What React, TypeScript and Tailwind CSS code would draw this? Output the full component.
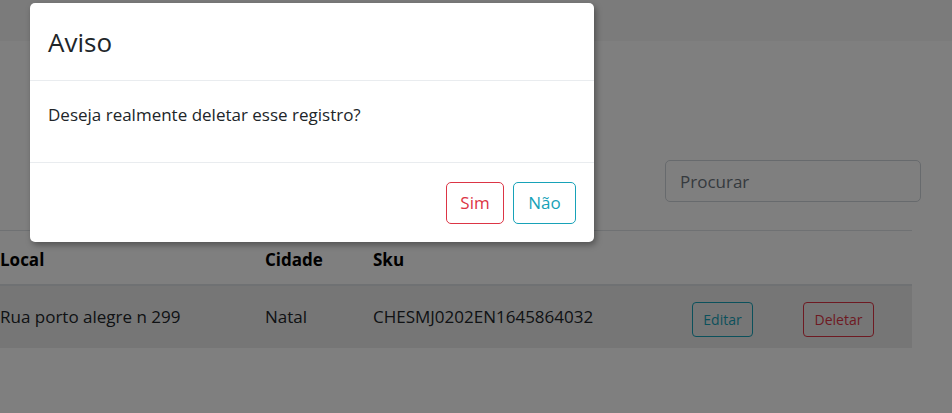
import React from "react";

export default function App() {
  return (
    <div className="relative h-[413px] w-[952px] overflow-hidden bg-white font-['Open_Sans','Noto_Sans',sans-serif] text-[#212529]">
      <div className="h-[41px] bg-[#f6f6f6]" />
      <div className="flex justify-end pr-[31px] pt-[119px]">
        <input
          readOnly
          placeholder="Procurar"
          className="h-[42px] w-[256px] rounded-[5px] border border-[#ced4da] bg-white px-[14px] text-[17px] text-[#495057] placeholder:text-[#6c757d] outline-none"
        />
      </div>
      <div className="mt-[28px] w-[912px] border-t border-[#dee2e6]">
        <div className="grid h-[55px] grid-cols-[265px_108px_319px_111px_109px] items-center border-b-2 border-[#dee2e6] pt-[4px] text-[17px] font-bold text-black">
          <div>Local</div>
          <div>Cidade</div>
          <div>Sku</div>
          <div />
          <div />
        </div>
        <div className="grid h-[62px] grid-cols-[265px_108px_319px_111px_109px] items-center bg-[#ededed] text-[17px]">
          <div>Rua porto alegre n 299</div>
          <div>Natal</div>
          <div>CHESMJ0202EN1645864032</div>
          <div className="pt-[5px]">
            <button className="h-[35px] w-[61px] rounded-[4px] border border-[#17a2b8] text-[14px] text-[#17a2b8]">
              Editar
            </button>
          </div>
          <div className="pt-[5px]">
            <button className="h-[35px] w-[71px] rounded-[4px] border border-[#dc3545] text-[14px] text-[#dc3545]">
              Deletar
            </button>
          </div>
        </div>
      </div>

      <div className="absolute inset-0 bg-black/50" />

      <div className="absolute left-[30px] top-[3px] w-[564px] rounded-[5px] bg-white shadow-[2px_3px_6px_rgba(0,0,0,0.35)]">
        <div className="flex h-[78px] items-center border-b border-[#e9ecef] px-[18px]">
          <h5 className="text-[26px] leading-none text-[#212529]">Aviso</h5>
        </div>
        <div className="flex h-[81px] items-start px-[18px] pt-[21px] text-[17px]">
          Deseja realmente deletar esse registro?
        </div>
        <div className="flex h-[80px] items-center justify-end gap-[9px] border-t border-[#e9ecef] pr-[18px]">
          <button className="h-[42px] w-[58px] rounded-[5px] border border-[#dc3545] text-[17px] text-[#dc3545]">
            Sim
          </button>
          <button className="h-[42px] w-[63px] rounded-[5px] border border-[#17a2b8] text-[17px] text-[#17a2b8]">
            Não
          </button>
        </div>
      </div>
    </div>
  );
}
